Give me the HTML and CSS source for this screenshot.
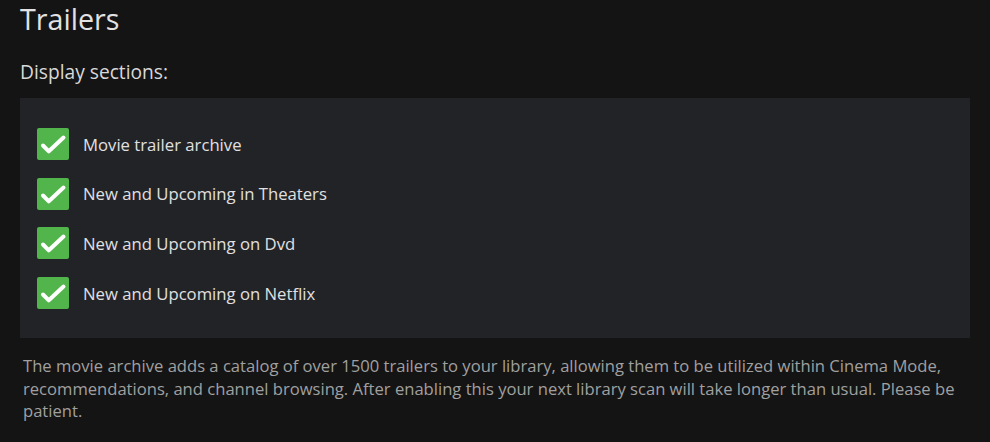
FILE: index.html
```html
<!DOCTYPE html>
<html>
<head>
<meta charset="utf-8">
<link rel="stylesheet" href="styles.css">
</head>
<body>
<div class="page">
  <h1 class="title">Trailers</h1>
  <h3 class="subtitle">Display sections:</h3>
  <div class="panel">
    <label class="row"><span class="box"><svg viewBox="0 0 32 32" width="32" height="32"><path d="M6 17.5l5.8 5.8L26.5 9.5" fill="none" stroke="#fff" stroke-width="4" stroke-linecap="round" stroke-linejoin="round"/></svg></span><span class="label">Movie trailer archive</span></label>
    <label class="row"><span class="box"><svg viewBox="0 0 32 32" width="32" height="32"><path d="M6 17.5l5.8 5.8L26.5 9.5" fill="none" stroke="#fff" stroke-width="4" stroke-linecap="round" stroke-linejoin="round"/></svg></span><span class="label">New and Upcoming in Theaters</span></label>
    <label class="row"><span class="box"><svg viewBox="0 0 32 32" width="32" height="32"><path d="M6 17.5l5.8 5.8L26.5 9.5" fill="none" stroke="#fff" stroke-width="4" stroke-linecap="round" stroke-linejoin="round"/></svg></span><span class="label">New and Upcoming on Dvd</span></label>
    <label class="row"><span class="box"><svg viewBox="0 0 32 32" width="32" height="32"><path d="M6 17.5l5.8 5.8L26.5 9.5" fill="none" stroke="#fff" stroke-width="4" stroke-linecap="round" stroke-linejoin="round"/></svg></span><span class="label">New and Upcoming on Netflix</span></label>
  </div>
  <p class="note">The movie archive adds a catalog of over 1500 trailers to your library, allowing them to be utilized within Cinema Mode, recommendations, and channel browsing. After enabling this your next library scan will take longer than usual. Please be patient.</p>
</div>
</body>
</html>
```
FILE: styles.css
```css
html, body {
  margin: 0;
  padding: 0;
  background: #141414;
  height: 100%;
}
body {
  font-family: "Open Sans", "Noto Sans", sans-serif;
  color: #ddd;
}
.page {
  padding: 0 20px;
}
.title {
  margin: 0;
  padding-top: 2px;
  font-size: 28.7px;
  font-weight: 400;
  line-height: 34px;
  color: #e2e2e2;
}
.subtitle {
  margin: 23px 0 0;
  font-size: 19.2px;
  font-weight: 400;
  line-height: 26px;
  color: #d8d8d8;
}
.panel {
  margin-top: 13px;
  background: #222327;
  padding: 30px 17px 29px;
  display: flex;
  flex-direction: column;
  gap: 17.7px;
}
.row {
  display: flex;
  align-items: center;
  gap: 14px;
  height: 32px;
}
.box {
  width: 32px;
  height: 32px;
  border-radius: 2px;
  background: #52b54b;
  display: flex;
}
.label {
  font-size: 16.7px;
  color: #e0e0e0;
}
.note {
  margin: 17px 0 0;
  padding-left: 3px;
  font-size: 16.6px;
  line-height: 22.5px;
  color: #a0a0a0;
}
```
